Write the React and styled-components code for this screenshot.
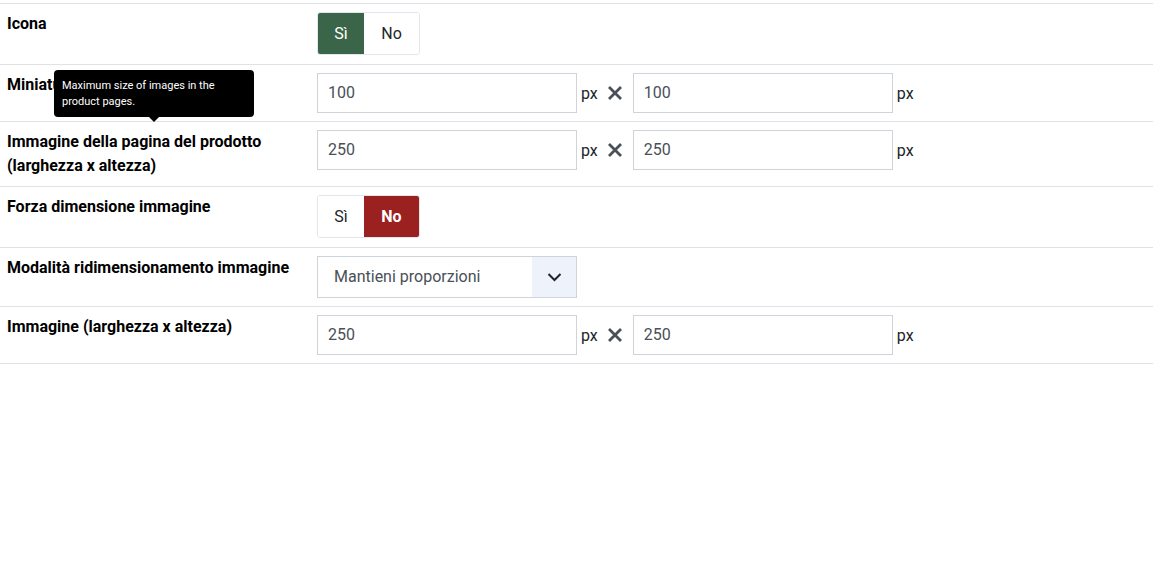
import React from "react";
import styled, { createGlobalStyle } from "styled-components";

const Global = createGlobalStyle`
  html, body { margin: 0; padding: 0; background: #fff; }
  body { font-family: Roboto, "Liberation Sans", Arial, sans-serif; color: #000; }
  * { box-sizing: border-box; }
`;

const Page = styled.div`
  padding-top: 3px;
  width: 1153px;
`;

const Form = styled.div`
  border-top: 1px solid #dfe3e7;
`;

const Row = styled.div`
  display: grid;
  grid-template-columns: 317px 1fr;
  padding: 8px 0 ${(p) => p.$pb || 8}px;
  border-bottom: 1px solid #dfe3e7;
  position: relative;
`;

const Label = styled.div`
  padding-left: 7px;
  font-size: 16px;
  font-weight: 700;
  line-height: 24px;
  color: #000;
`;

const Controls = styled.div`
  display: flex;
  align-items: center;
  align-self: start;
`;

const Toggle = styled.div`
  display: flex;
  height: 43px;
  border: 1px solid #e3e6ea;
  border-radius: 3px;
  overflow: hidden;
`;

const ToggleBtn = styled.div`
  display: flex;
  align-items: center;
  justify-content: center;
  width: ${(p) => p.$w}px;
  font-size: 16px;
  background: ${(p) => (p.$active ? p.$color : "#fff")};
  color: ${(p) => (p.$active ? "#fff" : "#212529")};
  font-weight: ${(p) => (p.$active && p.$bold ? 700 : 400)};
`;

const Input = styled.div`
  width: 260px;
  height: 40px;
  border: 1px solid #ced4da;
  display: flex;
  align-items: center;
  padding: 0 0 2px 10px;
  font-size: 16px;
  color: #495057;
`;

const Unit = styled.span`
  font-size: 16px;
  color: #212529;
  margin-left: 4px;
`;

const Times = styled.span`
  display: inline-flex;
  width: 35px;
  justify-content: center;
  align-items: center;
`;

const Select = styled.div`
  width: 260px;
  height: 42px;
  border: 1px solid #ced4da;
  display: flex;
  align-items: stretch;
`;

const SelectText = styled.div`
  flex: 1;
  display: flex;
  align-items: center;
  padding: 0 0 2px 16px;
  font-size: 16px;
  color: #495057;
`;

const SelectArrow = styled.div`
  width: 44px;
  background: #eef2fa;
  display: flex;
  align-items: center;
  justify-content: center;
`;

const Tooltip = styled.div`
  position: absolute;
  left: 54px;
  top: 5px;
  width: 200px;
  height: 47px;
  background: #000;
  color: #fff;
  border-radius: 4px;
  padding: 8px 8px;
  font-size: 11px;
  line-height: 16px;
  &::after {
    content: "";
    position: absolute;
    left: 95px;
    bottom: -5px;
    border-left: 5px solid transparent;
    border-right: 5px solid transparent;
    border-top: 5px solid #000;
  }
`;

const XIcon = () => (
  <svg width="16" height="16" viewBox="0 0 16 16">
    <path d="M2 2 L14 14 M14 2 L2 14" stroke="#495057" strokeWidth="2.8" strokeLinecap="butt" />
  </svg>
);

const Chevron = () => (
  <svg width="15" height="10" viewBox="0 0 15 10">
    <path d="M1.5 2 L7.5 8 L13.5 2" fill="none" stroke="#212529" strokeWidth="2" />
  </svg>
);

const Dimensions = ({ a, b }) => (
  <Controls>
    <Input>{a}</Input>
    <Unit>px</Unit>
    <Times>
      <XIcon />
    </Times>
    <Input>{b}</Input>
    <Unit>px</Unit>
  </Controls>
);

export default function App() {
  return (
    <Page>
      <Global />
      <Form>
        <Row $pb={9}>
          <Label>Icona</Label>
          <Controls>
            <Toggle>
              <ToggleBtn $w={46} $active $color="#3a6548">Sì</ToggleBtn>
              <ToggleBtn $w={55}>No</ToggleBtn>
            </Toggle>
          </Controls>
        </Row>
        <Row>
          <Label>Miniatura (larghezza x altezza)</Label>
          <Dimensions a="100" b="100" />
          <Tooltip>Maximum size of images in the product pages.</Tooltip>
        </Row>
        <Row>
          <Label>
            Immagine della pagina del prodotto
            <br />
            (larghezza x altezza)
          </Label>
          <Dimensions a="250" b="250" />
        </Row>
        <Row $pb={9}>
          <Label>Forza dimensione immagine</Label>
          <Controls>
            <Toggle>
              <ToggleBtn $w={46}>Sì</ToggleBtn>
              <ToggleBtn $w={55} $active $bold $color="#9b2020">No</ToggleBtn>
            </Toggle>
          </Controls>
        </Row>
        <Row>
          <Label>Modalità ridimensionamento immagine</Label>
          <Controls>
            <Select>
              <SelectText>Mantieni proporzioni</SelectText>
              <SelectArrow>
                <Chevron />
              </SelectArrow>
            </Select>
          </Controls>
        </Row>
        <Row>
          <Label>Immagine (larghezza x altezza)</Label>
          <Dimensions a="250" b="250" />
        </Row>
      </Form>
    </Page>
  );
}
